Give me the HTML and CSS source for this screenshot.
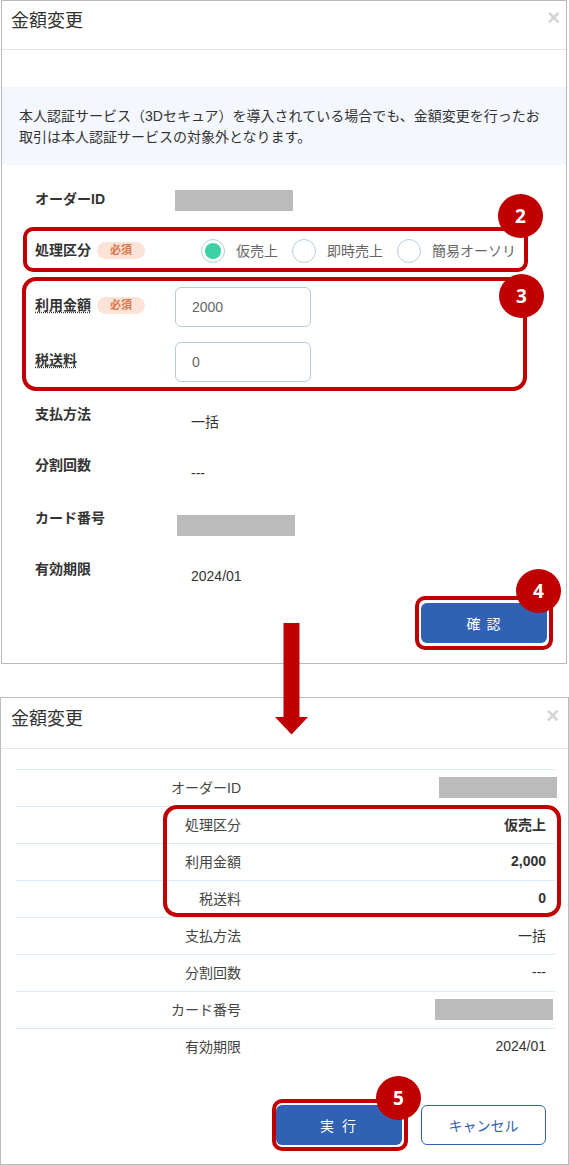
FILE: index.html
```html
<!DOCTYPE html>
<html lang="ja">
<head>
  <meta charset="UTF-8" />
  <title>金額変更</title>
  <link rel="stylesheet" href="styles.css">
</head>
<body>
  <div class="page">

    <!-- input step -->
    <div class="modal modal-input">
      <div class="modal-header">
        <h4>金額変更</h4>
        <span class="close">×</span>
      </div>
      <div class="notice">本人認証サービス（3Dセキュア）を導入されている場合でも、金額変更を行ったお取引は本人認証サービスの対象外となります。</div>
      <div class="form">
        <div class="label">オーダーID</div>
        <div><div class="masked"></div></div>

        <div class="label label-radio">処理区分<span class="required">必須</span></div>
        <div class="radios">
          <span class="radio radio-on"></span><span class="radio-text">仮売上</span>
          <span class="radio"></span><span class="radio-text">即時売上</span>
          <span class="radio"></span><span class="radio-text">簡易オーソリ</span>
        </div>

        <div class="label label-input"><span class="hint">利用金額</span><span class="required">必須</span></div>
        <div><input class="field" type="text" value="2000" /></div>

        <div class="label label-input"><span class="hint">税送料</span></div>
        <div><input class="field" type="text" value="0" /></div>

        <div class="label">支払方法</div>
        <div class="value">一括</div>

        <div class="label">分割回数</div>
        <div class="value">---</div>

        <div class="label">カード番号</div>
        <div class="value-card"><div class="masked"></div></div>

        <div class="label">有効期限</div>
        <div class="value value-date">2024/01</div>
      </div>
      <div class="form-footer">
        <button class="btn btn-primary">確 認</button>
      </div>
    </div>

    <!-- confirm step -->
    <div class="modal modal-confirm">
      <div class="modal-header">
        <h4>金額変更</h4>
        <span class="close">×</span>
      </div>
      <div class="table">
        <div class="tr"><div class="th">オーダーID</div><div class="td"><div class="masked masked-id"></div></div></div>
        <div class="tr"><div class="th">処理区分</div><div class="td td-bold">仮売上</div></div>
        <div class="tr"><div class="th">利用金額</div><div class="td td-bold">2,000</div></div>
        <div class="tr"><div class="th">税送料</div><div class="td td-bold">0</div></div>
        <div class="tr"><div class="th">支払方法</div><div class="td">一括</div></div>
        <div class="tr"><div class="th">分割回数</div><div class="td">---</div></div>
        <div class="tr"><div class="th">カード番号</div><div class="td"><div class="masked masked-card"></div></div></div>
        <div class="tr tr-last"><div class="th">有効期限</div><div class="td">2024/01</div></div>
      </div>
      <div class="table-footer">
        <button class="btn btn-primary btn-run">実 行</button>
        <button class="btn btn-outline">キャンセル</button>
      </div>
    </div>

    <!-- red callouts on top of the screenshot -->
    <div class="box box-radio"></div>
    <div class="box box-amount"></div>
    <div class="box box-confirm"></div>
    <div class="box box-rows"></div>
    <div class="box box-run"></div>
    <div class="num num-2">2</div>
    <div class="num num-3">3</div>
    <div class="num num-4">4</div>
    <div class="num num-5">5</div>
    <svg class="arrow" width="33" height="112" viewBox="0 0 33 112">
      <path d="M8.500 0H24.500V94H33L16.500 111.500L0 94H8.500Z" fill="#c00000"/>
    </svg>
  </div>
</body>
</html>
```

FILE: styles.css
```css
* {
  box-sizing: border-box;
}

body {
  margin: 0;
  background: #fff;
  color: #333;
  font-family: "Liberation Sans", "Noto Sans CJK JP", sans-serif;
  font-size: 14px;
}

.page {
  position: relative;
  width: 569px;
  height: 1165px;
  overflow: hidden;
}

/* modal */
.modal {
  border: 1px solid #bbb;
  background: #fff;
}

.modal-input {
  width: 566px;
  height: 664px;
  margin-left: 1px;
}

.modal-confirm {
  width: 569px;
  height: 468px;
  margin-top: 33px;
}

.modal-header {
  display: flex;
  justify-content: space-between;
  height: 49px;
  padding: 7px 6px 0 9px;
  border-bottom: 1px solid #e5e5e5;
}

.modal-confirm .modal-header {
  height: 51px;
  padding: 8px 9px 0 10px;
}

.modal-header h4 {
  margin: 0;
  font-size: 18px;
  font-weight: normal;
  line-height: 26px;
}

.close {
  color: #d4d4d4;
  font-size: 22px;
  font-weight: bold;
  line-height: 20px;
}

.notice {
  height: 78px;
  margin-top: 37px;
  padding: 19px 17px 0;
  background: #f4f7fe;
  line-height: 20.500px;
}

/* input form */
.form {
  display: grid;
  grid-template-columns: 140px 1fr;
  grid-template-rows: 49px 48px 55px 62px 51px 53px 51px 44px;
  margin-top: 25px;
  padding-left: 33px;
}

.label {
  font-weight: bold;
  line-height: 20px;
  margin-top: 0;
  display: flex;
  align-items: flex-start;
}

.form .label:first-child {
  margin-top: -1px;
}

.label-radio {
  margin-top: 1px;
}

.label-input {
  padding-top: 8px;
}

.hint {
  text-decoration: underline dotted;
  text-underline-offset: 2px;
}

.required {
  width: 48px;
  height: 17px;
  margin: 2px 0 0 6px;
  border-radius: 9px;
  background: #fbe3d8;
  color: #d9764a;
  font-size: 11px;
  font-weight: bold;
  line-height: 17px;
  text-align: center;
}

.masked {
  width: 118px;
  height: 21px;
  background: #bbb;
}

.radios {
  display: flex;
  align-items: flex-start;
  padding-left: 26px;
}

.radio {
  flex: none;
  width: 24px;
  height: 24px;
  border: 1px solid #b5cddd;
  border-radius: 50%;
}

.radio-on {
  padding: 3px;
  background: #3ad1a5 content-box;
}

.radio-text {
  margin: 2px 14px 0 11px;
  color: #666;
  line-height: 20px;
  white-space: nowrap;
}

.field {
  display: block;
  width: 136px;
  height: 40px;
  padding: 0 16px;
  border: 1px solid #b5cddd;
  border-radius: 6px;
  color: #666;
  font-family: inherit;
  font-size: 14px;
}

.value {
  padding: 8px 0 0 16px;
  line-height: 20px;
}

.value-date {
  padding-top: 7px;
}

.value-card {
  padding: 7px 0 0 2px;
}

.form-footer {
  display: flex;
  justify-content: flex-end;
  padding-right: 18px;
}

/* buttons */
.btn {
  width: 126px;
  height: 40px;
  border-radius: 6px;
  font-family: inherit;
  font-size: 14px;
}

.btn-primary {
  border: none;
  background: #3061b3;
  color: #fff;
  letter-spacing: 1px;
}

.form-footer .btn-primary {
  margin-right: 1px;
}

.btn-run {
  letter-spacing: 2px;
}

.btn-outline {
  width: 125px;
  border: 1px solid #3061b3;
  background: #fff;
  color: #3061b3;
}

/* confirm table */
.table {
  margin: 20px 13px 0 15px;
}

.tr {
  display: flex;
  align-items: center;
  height: 37px;
  padding-bottom: 2px;
  border-top: 1px solid #dcebfa;
}

.th {
  width: 225px;
  color: #444;
  text-align: right;
}

.td {
  display: flex;
  flex: 1;
  justify-content: flex-end;
  padding-right: 9px;
}

.td-bold {
  font-weight: bold;
}

.masked-id {
  margin-right: -11px;
}

.masked-card {
  margin-right: -7px;
}

.table-footer {
  display: flex;
  justify-content: flex-end;
  gap: 19px;
  margin-top: 40px;
  padding-right: 22px;
}

/* callouts */
.box {
  position: absolute;
  border: 4px solid #c00000;
  border-radius: 10px;
}

.box-radio {
  left: 23px;
  top: 227px;
  width: 505px;
  height: 45px;
}

.box-amount {
  left: 22px;
  top: 277px;
  width: 505px;
  height: 114px;
  border-radius: 14px;
}

.box-confirm {
  left: 415px;
  top: 596px;
  width: 138px;
  height: 54px;
}

.box-rows {
  left: 163px;
  top: 805px;
  width: 398px;
  height: 112px;
  border-radius: 14px;
}

.box-run {
  left: 272px;
  top: 1099px;
  width: 136px;
  height: 52px;
}

.num {
  position: absolute;
  width: 45px;
  height: 44px;
  border-radius: 50%;
  background: #c00000;
  color: #fff;
  font-family: "Noto Sans", sans-serif;
  font-size: 19px;
  font-weight: bold;
  line-height: 44px;
  text-align: center;
}

.num-2 {
  left: 498px;
  top: 194px;
}

.num-3 {
  left: 499px;
  top: 274px;
}

.num-4 {
  left: 516px;
  top: 569px;
}

.num-5 {
  left: 376px;
  top: 1076px;
}

.arrow {
  position: absolute;
  left: 275px;
  top: 623px;
}
```
